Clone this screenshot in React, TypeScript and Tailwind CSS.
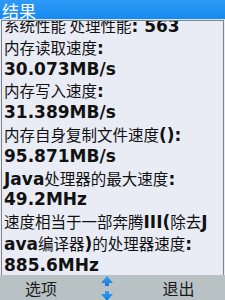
import React from 'react';

// Lines of the result screen. Latin parts are bold, CJK parts regular.
type Part = { t: string; b?: boolean };
const lines: Part[][] = [
  [{ t: '系统性能 处理性能' }, { t: ': 563', b: true }],
  [{ t: '内存读取速度' }, { t: ':', b: true }],
  [{ t: '30.073MB/s', b: true }],
  [{ t: '内存写入速度' }, { t: ':', b: true }],
  [{ t: '31.389MB/s', b: true }],
  [{ t: '内存自身复制文件速度' }, { t: '():', b: true }],
  [{ t: '95.871MB/s', b: true }],
  [{ t: 'Java', b: true }, { t: '处理器的最大速度' }, { t: ':', b: true }],
  [{ t: '49.2MHz', b: true }],
  [{ t: '速度相当于一部奔腾' }, { t: 'III(', b: true }, { t: '除去' }, { t: 'J', b: true }],
  [{ t: 'ava', b: true }, { t: '编译器' }, { t: ')', b: true }, { t: '的处理器速度' }, { t: ':', b: true }],
  [{ t: '885.6MHz', b: true }],
];

const ScrollArrows = () => (
  <svg width="12" height="25" viewBox="0 0 12 25">
    <defs>
      <linearGradient id="ar" x1="0" y1="0" x2="0" y2="1">
        <stop offset="0" stopColor="#3aa0f5" />
        <stop offset="1" stopColor="#1577d8" />
      </linearGradient>
    </defs>
    <path d="M6 0 L12 7 L8 7 L8 10 L4 10 L4 7 L0 7 Z" fill="url(#ar)" />
    <path d="M6 25 L12 18 L8 18 L8 15 L4 15 L4 18 L0 18 Z" fill="url(#ar)" />
  </svg>
);

export default function App() {
  return (
    <div className="w-[225px] h-[300px] flex flex-col bg-[#e9ecf5] overflow-hidden" style={{ fontFamily: '"DejaVu Sans", "Noto Sans CJK SC", sans-serif' }}>
      <div className="h-[19px] shrink-0 bg-gradient-to-b from-[#2d9af7] to-[#168af0] px-[2px] text-white text-[17px] leading-[21px] overflow-hidden" style={{ fontFamily: '"Noto Sans CJK SC", sans-serif' }}>
        结果
      </div>
      <div className="h-px bg-[#d8e6f5] shrink-0" />
      <div className="flex-1 mx-[1px] border-t border-x border-[#7d828c] overflow-hidden">
        <div className="mt-[-6px] pl-[2px] text-[#111]">
          {lines.map((ln, i) => (
            <div key={i} className="h-[21.8px] leading-[21.8px] whitespace-nowrap">
              {ln.map((p, j) =>
                p.b ? (
                  <span key={j} className="font-bold text-[17px]">{p.t}</span>
                ) : (
                  <span key={j} className="font-normal text-[15.5px]" style={{ fontFamily: '"Noto Sans CJK SC", sans-serif' }}>{p.t}</span>
                )
              )}
            </div>
          ))}
        </div>
      </div>
      <div className="h-[25px] shrink-0 bg-[#b8c2c5] flex items-center text-[16px] text-[#1a1a1a]" style={{ fontFamily: '"Noto Sans CJK SC", sans-serif' }}>
        <div className="w-[82px] text-center">选项</div>
        <div className="w-[50px] flex justify-center items-center pt-[1px]">
          <ScrollArrows />
        </div>
        <div className="flex-1 text-center">退出</div>
      </div>
    </div>
  );
}
